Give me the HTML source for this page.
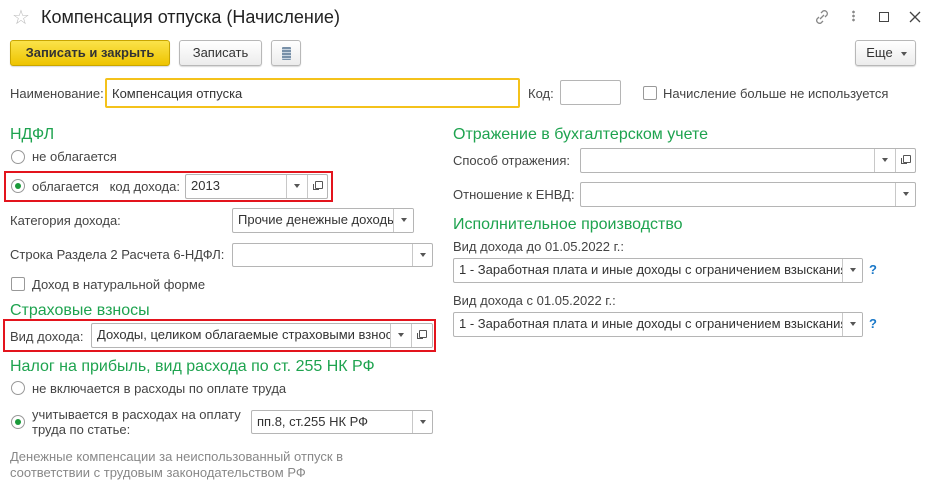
<!DOCTYPE html>
<html><head><meta charset="utf-8"><style>
*{box-sizing:border-box;margin:0;padding:0}
body{width:934px;height:491px;background:#fff;font-family:"Liberation Sans",Arial,sans-serif;font-size:13px;color:#444;position:relative;overflow:hidden}
.a{position:absolute;white-space:nowrap}
.g{color:#1ea34f;font-size:16px}
.in{position:absolute;border:1px solid #b5b5b5;border-radius:2px;background:#fff;overflow:hidden;white-space:nowrap;padding:3px 0 0 5px;color:#333}
.sep{position:absolute;top:0;bottom:0;width:21px;border-left:1px solid #c8c8c8}
.dd::after{content:"";position:absolute;left:7px;top:9px;border-left:3px solid transparent;border-right:3px solid transparent;border-top:4px solid #555}
.op::after{content:"";position:absolute;left:7px;top:6px;width:6px;height:6px;border:1px solid #555;border-radius:1px}
.op::before{content:"";position:absolute;left:5px;top:9px;width:5px;height:5px;border-left:1px solid #555;border-bottom:1px solid #555}
.rad{position:absolute;width:14px;height:14px;border:1px solid #999;border-radius:50%;background:#fff}
.rad.on::after{content:"";position:absolute;left:3px;top:3px;width:6px;height:6px;border-radius:50%;background:#1a9a3a}
.chk{position:absolute;width:14px;height:14px;border:1px solid #999;border-radius:2px;background:#fff}
.btn{position:absolute;border:1px solid #b8b8b8;border-radius:3px;background:linear-gradient(#fff,#ececec);box-shadow:0 1px 1px rgba(0,0,0,.15);text-align:center;line-height:24px;color:#333}
.red{position:absolute;border:2px solid #e3141d}
</style></head><body>
<div class="a" style="left:12px;top:5px;font-size:20px;color:#bbb">☆</div>
<div class="a" style="left:41px;top:7px;font-size:18px;color:#222">Компенсация отпуска (Начисление)</div>
<svg class="a" style="left:812px;top:7px" width="20" height="20" viewBox="0 0 20 20"><g fill="none" stroke="#888" stroke-width="1.3"><path d="M9 6l2-2a3 3 0 014 4l-2 2"/><path d="M11 14l-2 2a3 3 0 01-4-4l2-2"/><path d="M8 12l4-4"/></g></svg>
<div class="a" style="left:852px;top:10px;width:3px;height:12px;background:radial-gradient(circle,#888 1.2px,transparent 1.5px) 0 0/3px 4px"></div>
<div class="a" style="left:879px;top:12px;width:10px;height:10px;border:1.5px solid #444"></div>
<svg class="a" style="left:909px;top:11px" width="12" height="12"><path d="M1 1L11 11M11 1L1 11" stroke="#444" stroke-width="1.3"/></svg>

<div class="btn" style="left:10px;top:40px;width:160px;height:26px;background:linear-gradient(#fbe34a,#eec400);border-color:#c9a600;font-weight:bold;color:#333">Записать и закрыть</div>
<div class="btn" style="left:179px;top:40px;width:83px;height:26px">Записать</div>
<div class="btn" style="left:271px;top:40px;width:30px;height:26px"><div style="position:absolute;left:10px;top:6px;width:9px;height:13px;background:repeating-linear-gradient(#7890a8 0 2px,#c8d4e0 2px 3px);border-radius:1px"></div></div>
<div class="btn" style="left:855px;top:40px;width:61px;height:26px;padding-right:12px">Еще<span style="position:absolute;right:8px;top:11px;border-left:3px solid transparent;border-right:3px solid transparent;border-top:4px solid #555"></span></div>

<div class="a" style="left:10px;top:86px">Наименование:</div>
<div class="in" style="left:105px;top:78px;width:415px;height:30px;border:2px solid #f4c21b;padding-top:6px">Компенсация отпуска</div>
<div class="a" style="left:528px;top:86px">Код:</div>
<div class="in" style="left:560px;top:80px;width:61px;height:25px"></div>
<div class="chk" style="left:643px;top:86px"></div>
<div class="a" style="left:663px;top:86px">Начисление больше не используется</div>

<div class="a g" style="left:10px;top:126px">НДФЛ</div>
<div class="rad" style="left:11px;top:150px"></div>
<div class="a" style="left:32px;top:149px">не облагается</div>
<div class="red" style="left:4px;top:171px;width:329px;height:31px"></div>
<div class="rad on" style="left:11px;top:179px"></div>
<div class="a" style="left:32px;top:179px">облагается&nbsp;&nbsp; код дохода:</div>
<div class="in" style="left:185px;top:174px;width:143px;height:25px">2013<div class="sep dd" style="left:100px"></div><div class="sep op" style="left:121px"></div></div>

<div class="a" style="left:10px;top:213px">Категория дохода:</div>
<div class="in" style="left:232px;top:208px;width:182px;height:25px">Прочие денежные доходы<div class="sep dd" style="left:160px;background:#fff"></div></div>
<div class="a" style="left:10px;top:247px">Строка Раздела 2 Расчета 6-НДФЛ:</div>
<div class="in" style="left:232px;top:243px;width:201px;height:24px"><div class="sep dd" style="left:179px"></div></div>
<div class="chk" style="left:11px;top:277px"></div>
<div class="a" style="left:32px;top:277px">Доход в натуральной форме</div>

<div class="a g" style="left:10px;top:302px">Страховые взносы</div>
<div class="red" style="left:3px;top:319px;width:433px;height:33px"></div>
<div class="a" style="left:10px;top:329px">Вид дохода:</div>
<div class="in" style="left:91px;top:323px;width:342px;height:25px">Доходы, целиком облагаемые страховыми взносами<div class="sep dd" style="left:298px;background:#fff"></div><div class="sep op" style="left:319px;background:#fff"></div></div>

<div class="a g" style="left:10px;top:358px">Налог на прибыль, вид расхода по ст. 255 НК РФ</div>
<div class="rad" style="left:11px;top:381px"></div>
<div class="a" style="left:32px;top:381px">не включается в расходы по оплате труда</div>
<div class="rad on" style="left:11px;top:415px"></div>
<div class="a" style="left:32px;top:407px;line-height:15px">учитывается в расходах на оплату<br>труда по статье:</div>
<div class="in" style="left:251px;top:410px;width:182px;height:24px">пп.8, ст.255 НК РФ<div class="sep dd" style="left:160px"></div></div>
<div class="a" style="left:10px;top:449px;line-height:16px;color:#888">Денежные компенсации за неиспользованный отпуск в<br>соответствии с трудовым законодательством РФ</div>

<div class="a g" style="left:453px;top:126px">Отражение в бухгалтерском учете</div>
<div class="a" style="left:453px;top:153px">Способ отражения:</div>
<div class="in" style="left:580px;top:148px;width:336px;height:25px"><div class="sep dd" style="left:293px"></div><div class="sep op" style="left:314px"></div></div>
<div class="a" style="left:453px;top:187px">Отношение к ЕНВД:</div>
<div class="in" style="left:580px;top:182px;width:336px;height:25px"><div class="sep dd" style="left:314px"></div></div>
<div class="a g" style="left:453px;top:216px">Исполнительное производство</div>
<div class="a" style="left:453px;top:239px">Вид дохода до 01.05.2022 г.:</div>
<div class="in" style="left:453px;top:258px;width:410px;height:25px">1 - Заработная плата и иные доходы с ограничением взыскания<div class="sep dd" style="left:388px;background:#fff"></div></div>
<div class="a" style="left:869px;top:262px;color:#1a78c8;font-weight:bold">?</div>
<div class="a" style="left:453px;top:293px">Вид дохода с 01.05.2022 г.:</div>
<div class="in" style="left:453px;top:312px;width:410px;height:25px">1 - Заработная плата и иные доходы с ограничением взыскания<div class="sep dd" style="left:388px;background:#fff"></div></div>
<div class="a" style="left:869px;top:316px;color:#1a78c8;font-weight:bold">?</div>
</body></html>
